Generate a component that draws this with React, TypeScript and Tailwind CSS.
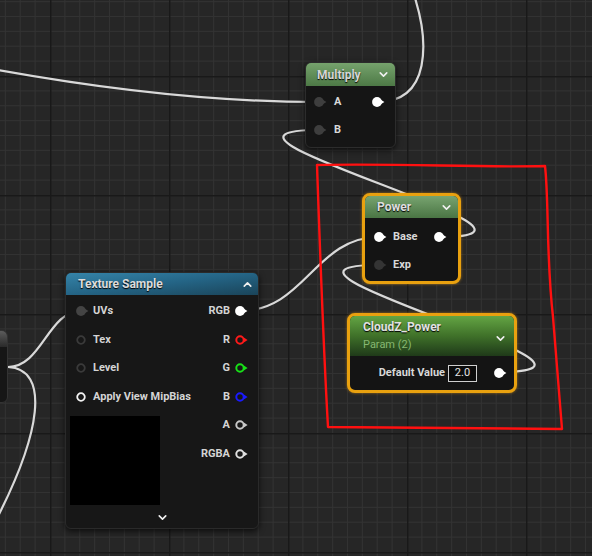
import { ChevronDown, ChevronUp } from 'lucide-react'

type PinKind = 'filled' | 'hollow' | 'ring'

function Pin({ kind = 'filled', color = '#ffffff' }: { kind?: PinKind; color?: string }) {
  return (
    <svg width="13" height="10" viewBox="0 0 13 10" className="shrink-0 overflow-visible">
      {kind === 'filled' && (
        <>
          <circle cx="5" cy="5" r="4.9" fill={color} />
          <path d="M8 2.2 L12.4 5 L8 7.8 Z" fill={color} />
        </>
      )}
      {kind === 'hollow' && (
        <>
          <circle cx="5" cy="5" r="3.7" fill="none" stroke={color} strokeWidth="2" />
          <path d="M8.8 2.4 L12.6 5 L8.8 7.6 Z" fill={color} />
        </>
      )}
      {kind === 'ring' && <circle cx="5" cy="5" r="3.8" fill="none" stroke={color} strokeWidth="1.8" />}
    </svg>
  )
}

const wire = '#d9d9d9'

function Canvas() {
  return (
    <svg className="absolute inset-0" width="592" height="556" viewBox="0 0 592 556">
      <defs>
        <pattern id="grid" x="50" y="76" width="119" height="119" patternUnits="userSpaceOnUse">
          {[1, 2, 3, 4, 5, 6, 7].map(i => (
            <g key={i}>
              <line x1={i * 14.875} y1="0" x2={i * 14.875} y2="119" stroke="#323232" strokeWidth="1" />
              <line x1="0" y1={i * 14.875} x2="119" y2={i * 14.875} stroke="#323232" strokeWidth="1" />
            </g>
          ))}
          <line x1="0.5" y1="0" x2="0.5" y2="119" stroke="#191919" strokeWidth="2" />
          <line x1="0" y1="0.5" x2="119" y2="0.5" stroke="#191919" strokeWidth="2" />
        </pattern>
      </defs>
      <rect width="592" height="556" fill="#262626" />
      <rect width="592" height="556" fill="url(#grid)" />

      <g fill="none" stroke={wire} strokeWidth="2.2" strokeLinecap="round">
        {/* into Multiply A */}
        <path d="M -2 70 C 120 92, 220 102, 319 102" />
        {/* Multiply out, heading off the top */}
        <path d="M 377 102 C 432 102, 428 40, 415 -2" />
        {/* Power out -> Multiply B */}
        <path d="M 439 237 C 599 237, 159 130, 319 130" />
        {/* CloudZ out -> Power Exp */}
        <path d="M 499 372 C 659 372, 219 265, 379 265" />
        {/* RGB -> Power Base */}
        <path d="M 240 311 C 305 311, 315 237, 379 237" />
        {/* left node -> UVs */}
        <path d="M 8 367 C 42 367, 48 311, 81 311" />
        {/* left node -> off screen bottom */}
        <path d="M 8 367 C 50 369, 42 432, -6 524" />
      </g>
    </svg>
  )
}

function Multiply() {
  return (
    <div className="absolute left-[305px] top-[62px] w-[91px] rounded-[6px] overflow-hidden border border-[#2c2c2c] bg-[#151515] shadow-[0_2px_6px_rgba(0,0,0,0.7)]">
      <div className="h-[23px] flex items-center justify-between pl-[11px] pr-[5px] bg-gradient-to-b from-[#76a36d] to-[#4d7946]">
        <span className="text-[12px] font-bold text-[#d6d6d6] [text-shadow:0_1px_1px_#000]">Multiply</span>
        <ChevronDown size={13} strokeWidth={3} className="text-[#eeeeee]" />
      </div>
      <div className="pt-[2px] pb-[3px]">
        <div className="h-[28px] flex items-center justify-between pl-[8px] pr-[10px]">
          <div className="flex items-center gap-[7px]">
            <Pin color="#3e3e3e" />
            <span className="text-[11px] font-bold text-[#d8d8d8]">A</span>
          </div>
          <Pin />
        </div>
        <div className="h-[28px] flex items-center pl-[8px]">
          <div className="flex items-center gap-[7px]">
            <Pin color="#3e3e3e" />
            <span className="text-[11px] font-bold text-[#d8d8d8]">B</span>
          </div>
        </div>
      </div>
    </div>
  )
}

function Power() {
  return (
    <div className="absolute left-[362px] top-[193px] w-[99px] rounded-[8px] border-[3px] border-[#e9a10f] bg-[#141414] overflow-hidden shadow-[0_0_3px_rgba(240,160,20,0.6)]">
      <div className="h-[22px] flex items-center justify-between pl-[12px] pr-[5px] bg-gradient-to-b from-[#78a470] to-[#4a7544]">
        <span className="text-[12px] font-bold text-[#dedede] [text-shadow:0_1px_1px_#000]">Power</span>
        <ChevronDown size={13} strokeWidth={3} className="text-[#eeeeee]" />
      </div>
      <div className="pt-[5px] pb-[2px]">
        <div className="h-[28px] flex items-center justify-between pl-[9px] pr-[11px]">
          <div className="flex items-center gap-[6px]">
            <Pin />
            <span className="text-[11px] font-bold text-[#d8d8d8]">Base</span>
          </div>
          <Pin />
        </div>
        <div className="h-[28px] flex items-center pl-[9px]">
          <div className="flex items-center gap-[6px]">
            <Pin color="#343434" />
            <span className="text-[11px] font-bold text-[#d8d8d8]">Exp</span>
          </div>
        </div>
      </div>
    </div>
  )
}

function CloudZPower() {
  return (
    <div className="absolute left-[347px] top-[313px] w-[170px] rounded-[8px] border-[3px] border-[#e9a10f] bg-[#141414] overflow-hidden shadow-[0_0_3px_rgba(240,160,20,0.6)]">
      <div className="h-[40px] flex items-center justify-between pl-[13px] pr-[7px] bg-gradient-to-b from-[#64a544] via-[#3f7129] to-[#1f3a19]">
        <div className="flex flex-col leading-[17px]">
          <span className="text-[12px] font-bold text-[#e2e2e2] [text-shadow:0_1px_1px_#000]">CloudZ_Power</span>
          <span className="text-[11px] text-[#86b872]">Param (2)</span>
        </div>
        <ChevronDown size={13} strokeWidth={3} className="text-[#eeeeee] mt-[4px]" />
      </div>
      <div className="h-[28px] mt-[3px] mb-[3px] flex items-center justify-end pr-[7px]">
        <span className="text-[11px] font-bold text-[#d8d8d8]">Default Value</span>
        <div className="ml-[3px] w-[29px] h-[17px] border border-[#cfcfcf] bg-[#0c0c0c] flex items-center justify-center text-[11px] text-[#e4e4e4]">
          2.0
        </div>
        <div className="ml-[17px]">
          <Pin />
        </div>
      </div>
    </div>
  )
}

function InRow({ label, kind, color }: { label: string; kind: PinKind; color: string }) {
  return (
    <div className="h-[28.5px] flex items-center gap-[4px] pl-[10px]">
      <Pin kind={kind} color={color} />
      <span className="text-[11px] font-bold text-[#d4d4d4] whitespace-nowrap">{label}</span>
    </div>
  )
}

function OutRow({ label, kind, color }: { label: string; kind: PinKind; color: string }) {
  return (
    <div className="h-[28.5px] flex items-center justify-end gap-[5px] pr-[10px]">
      <span className="text-[11px] font-bold text-[#d4d4d4]">{label}</span>
      <Pin kind={kind} color={color} />
    </div>
  )
}

function TextureSample() {
  return (
    <div className="absolute left-[65px] top-[272px] w-[194px] h-[257px] rounded-[6px] overflow-hidden border border-[#2a2a2a] bg-[#171717] shadow-[0_2px_6px_rgba(0,0,0,0.7)]">
      <div className="h-[22px] flex items-center justify-between pl-[12px] pr-[4px] bg-gradient-to-br from-[#3584a9] via-[#246485] to-[#1a4459]">
        <span className="text-[12px] font-bold text-[#dcdcdc] [text-shadow:0_1px_1px_#000]">Texture Sample</span>
        <ChevronUp size={13} strokeWidth={3} className="text-[#eeeeee]" />
      </div>
      <div className="flex justify-between pt-[2px]">
        <div className="flex flex-col">
          <InRow label="UVs" kind="filled" color="#444444" />
          <InRow label="Tex" kind="ring" color="#3a3a3a" />
          <InRow label="Level" kind="ring" color="#3a3a3a" />
          <InRow label="Apply View MipBias" kind="ring" color="#f2f2f2" />
          <div className="ml-[4px] mt-[5px] w-[90px] h-[89px] bg-black" />
        </div>
        <div className="flex flex-col">
          <OutRow label="RGB" kind="filled" color="#ffffff" />
          <OutRow label="R" kind="hollow" color="#ff1a1a" />
          <OutRow label="G" kind="hollow" color="#18e018" />
          <OutRow label="B" kind="hollow" color="#1a1aff" />
          <OutRow label="A" kind="hollow" color="#c8c8c8" />
          <OutRow label="RGBA" kind="hollow" color="#e0e0e0" />
        </div>
      </div>
      <div className="h-[24px] flex items-center justify-center">
        <ChevronDown size={13} strokeWidth={3} className="text-[#eeeeee]" />
      </div>
    </div>
  )
}

function EdgeNode() {
  return (
    <div className="absolute left-[-60px] top-[330px] w-[68px] h-[73px] rounded-[6px] overflow-hidden border border-[#333333] bg-[#161616]">
      <div className="h-[16px] bg-gradient-to-b from-[#5c5c5c] to-[#2a2a2a]" />
    </div>
  )
}

function Marker() {
  return (
    <svg className="absolute inset-0 pointer-events-none" width="592" height="556" viewBox="0 0 592 556">
      <path
        d="M 317 165 C 400 163, 480 168, 545 166 C 549 200, 546 255, 553 317 C 557 370, 560 405, 562 429 C 480 428, 400 428, 328 427 C 323 340, 320 250, 317 165 Z"
        fill="none"
        stroke="#ff1010"
        strokeWidth="2.4"
        strokeLinejoin="round"
      />
    </svg>
  )
}

export default function App() {
  return (
    <div className="relative w-[592px] h-[556px] overflow-hidden bg-[#262626] font-['Roboto',sans-serif]">
      <Canvas />
      <EdgeNode />
      <Multiply />
      <Power />
      <CloudZPower />
      <TextureSample />
      <Marker />
    </div>
  )
}
